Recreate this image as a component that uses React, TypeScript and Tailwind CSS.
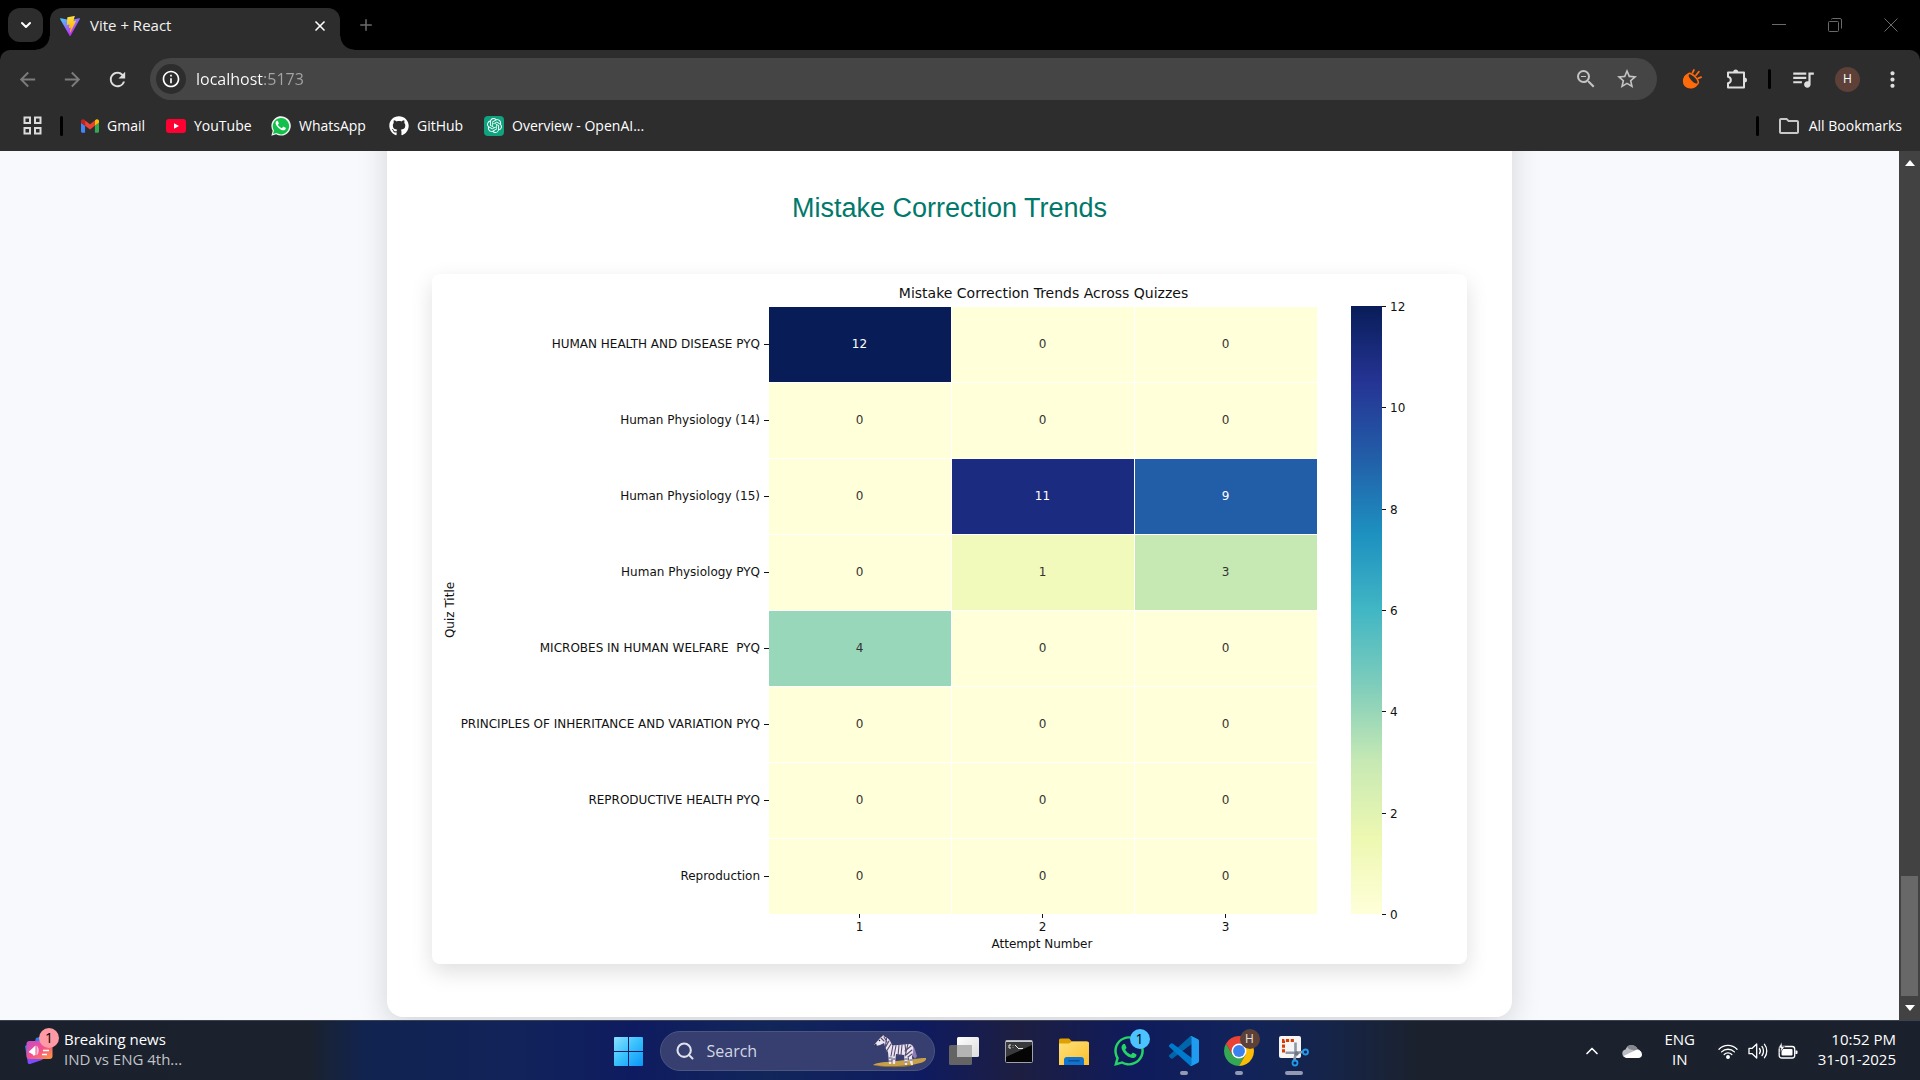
import type { ReactNode } from "react";
import {
  MdArrowBack,
  MdArrowForward,
  MdRefresh,
  MdInfoOutline,
  MdStarOutline,
  MdZoomOut,
  MdQueueMusic,
  MdMoreVert,
  MdOutlineFolder,
} from "react-icons/md";
import { FaGithub, FaWhatsapp } from "react-icons/fa";
import { SiOpenai } from "react-icons/si";
import { ChevronDown, ChevronUp, Plus, X, Search } from "lucide-react";

/* ---------- logos ---------- */

function ViteLogo() {
  return (
    <svg viewBox="0 0 256 257" className="size-5 shrink-0" aria-hidden="true">
      <defs>
        <linearGradient id="vite-a" x1="0" y1="0" x2="0.6" y2="0.8">
          <stop offset="0" stopColor="#41D1FF" />
          <stop offset="1" stopColor="#BD34FE" />
        </linearGradient>
        <linearGradient id="vite-b" x1="0.4" y1="0" x2="0.5" y2="1">
          <stop offset="0" stopColor="#FFEA83" />
          <stop offset="0.1" stopColor="#FFDD35" />
          <stop offset="1" stopColor="#FFA800" />
        </linearGradient>
      </defs>
      <path fill="url(#vite-a)" d="M255.153 37.938L134.897 252.976c-2.483 4.44-8.862 4.466-11.382.048L.875 37.958c-2.746-4.814 1.371-10.646 6.827-9.67l120.385 21.517a6.537 6.537 0 0 0 2.322-.004l117.867-21.483c5.438-.991 9.574 4.796 6.877 9.62Z" />
      <path fill="url(#vite-b)" d="M185.432.063L96.44 17.501a3.268 3.268 0 0 0-2.634 3.014l-5.474 92.456a3.268 3.268 0 0 0 3.997 3.378l24.777-5.718c2.318-.535 4.413 1.507 3.936 3.838l-7.361 36.047c-.495 2.426 1.782 4.5 4.151 3.78l15.304-4.649c2.372-.72 4.652 1.36 4.15 3.788l-11.698 56.621c-.732 3.542 3.979 5.473 5.943 2.437l1.313-2.028l72.516-144.72c1.215-2.423-.88-5.186-3.54-4.672l-25.505 4.922c-2.396.462-4.435-1.77-3.759-4.114l16.646-57.705c.677-2.35-1.37-4.583-3.769-4.113Z" />
    </svg>
  );
}

function GmailLogo() {
  return (
    <svg viewBox="52 42 88 66" className="h-[14px] w-[18px]" aria-hidden="true">
      <path fill="#4285f4" d="M58 108h14V74L52 59v43c0 3.32 2.69 6 6 6" />
      <path fill="#34a853" d="M120 108h14c3.32 0 6-2.69 6-6V59l-20 15" />
      <path fill="#fbbc04" d="M120 48v26l20-15v-8c0-7.42-8.47-11.65-14.4-7.2" />
      <path fill="#ea4335" d="M72 74V48l24 18 24-18v26L96 92" />
      <path fill="#c5221f" d="M52 51v8l20 15V48l-5.6-4.2c-5.94-4.45-14.4-.22-14.4 7.2" />
    </svg>
  );
}

function YouTubeLogo() {
  return (
    <svg viewBox="0 0 20 14" className="h-[14px] w-5" aria-hidden="true">
      <rect width="20" height="14" rx="3" fill="#ff0033" />
      <path d="M8 4.2v5.6L13 7z" fill="#fff" />
    </svg>
  );
}

function WhatsAppBookmark() {
  return (
    <svg viewBox="0 0 20 20" className="size-5" aria-hidden="true">
      <path d="M.4 19.7 1.7 14.8A9.7 9.7 0 1 1 5.2 18.3z" fill="#f4f4f4" />
      <path d="M2 18.1 3 14.6A8.2 8.2 0 1 1 5.5 17.1z" fill="#12c04a" />
      <path d="M7.1 5.4c-.3-.7-.7-.6-1-.6-.8.1-1.5 1-1.5 2.1 0 1.300 1 2.700 1.900 3.800 1.300 1.600 3 2.900 4.800 3.500 1.500.5 3-.2 3.300-1.200.2-.6.2-1.100 0-1.200l-2-1c-.3-.1-.5-.1-.7.2l-.8 1c-.2.200-.3.200-.600.100-1.500-.7-2.700-1.700-3.500-3.100-.1-.3 0-.4.100-.5l.600-.800c.1-.2.1-.4 0-.600z" fill="#fff" />
    </svg>
  );
}

function AppsGrid() {
  return (
    <svg viewBox="0 0 19 19" className="size-[19px]" fill="none" stroke="#dcdcdc" strokeWidth="2" aria-hidden="true">
      <rect x="1.500" y="1.500" width="5.500" height="5.500" />
      <rect x="12" y="1.500" width="5.500" height="5.500" />
      <rect x="1.500" y="12" width="5.500" height="5.500" />
      <rect x="12" y="12" width="5.500" height="5.500" />
    </svg>
  );
}

function OrangeExtension() {
  return (
    <svg viewBox="0 0 20 20" className="size-5" aria-hidden="true">
      <path d="M6.300 4.600C3.700 4.900.900 8 .900 12.200c0 4.400 3.300 7.200 7.600 7.200 3.700 0 6.800-1.900 7.400-4.500C13.600 15.600 4.600 9.500 6.300 4.600z" fill="#ff6a0a" />
      <path d="M6.400 4.800c-1 1.400-.2 4.200 2.300 6.900 2.500 2.600 5.500 4 7 3.200 1.400-1 .400-3.900-2.200-6.600C11 5.700 7.700 3.700 6.400 4.800z" fill="#2d2d2d" stroke="#ff6a0a" strokeWidth="1.600" />
      <path d="M10.600 3.600 11.900 1M14 6.200l2.800-3.400M16.200 9.400l2.900-1.300" stroke="#ff6a0a" strokeWidth="1.800" strokeLinecap="round" />
    </svg>
  );
}

function PuzzlePiece() {
  return (
    <svg viewBox="0 0 21 21" className="size-[21px]" aria-hidden="true">
      <path
        d="M2 3.500h16v15H2v-4.300c3.800-.8 3.800-5.600 0-6.400z"
        fill="none"
        stroke="#dedede"
        strokeWidth="2"
        strokeLinejoin="round"
      />
      <path d="M7.200 3a2.500 2.500 0 0 1 5 0zM18.500 8.500a2.500 2.500 0 0 1 0 5z" fill="#dedede" />
    </svg>
  );
}

function NewsIcon() {
  return (
    <svg viewBox="0 0 30 30" className="size-[30px]" aria-hidden="true">
      <defs>
        <linearGradient id="news-a" x1="0" y1="0" x2="1" y2="1">
          <stop offset="0" stopColor="#c44bd0" />
          <stop offset="0.500" stopColor="#f4508c" />
          <stop offset="1" stopColor="#ff9a3c" />
        </linearGradient>
      </defs>
      <path d="M12 4 22 1l3 10H10z" fill="#2f7ff0" />
      <path d="M1 12 6 9v16l-3-1z" fill="#1e88e5" />
      <path d="m3 24 18-1-3 3-12 4c-1.500.3-2-.5-2.200-1.500z" fill="#7c4dff" />
      <rect x="2.500" y="7" width="26" height="18" rx="3" fill="url(#news-a)" />
      <path d="m4.500 18 7-6.500v9.500l-2 .8-1-1.500z" fill="#fff" />
      <path d="M12.500 11.500c3 2 3 8 0 10z" fill="#ffc0dc" />
      <path d="M19 16.500h6M18 20.500h5" stroke="#fff" strokeWidth="1.600" />
    </svg>
  );
}

function WindowsLogo() {
  return (
    <svg viewBox="0 0 29 29" className="size-[29px]" aria-hidden="true">
      <defs>
        <linearGradient id="win" x1="0" y1="0" x2="1" y2="1">
          <stop offset="0" stopColor="#8be1ff" />
          <stop offset="0.500" stopColor="#37c0fc" />
          <stop offset="1" stopColor="#0a95f8" />
        </linearGradient>
      </defs>
      <path fill="url(#win)" d="M1 0h13v14H0V1a1 1 0 0 1 1-1zM15 0h13a1 1 0 0 1 1 1v13H15zM0 15h14v14H1a1 1 0 0 1-1-1zM15 15h14v13a1 1 0 0 1-1 1H15z" />
    </svg>
  );
}

function Zebra() {
  return (
    <svg viewBox="0 0 56 34" className="h-[34px] w-14" aria-hidden="true">
      <path d="M1 31c4-3 14-3 24-4 12-1 22-3 29-3 1 3-4 5-10 6-8 3-30 4-43 1z" fill="#c9a04a" />
      <path d="M1 31c12 2 32 1 42-1l-2 1.500C31 34 8 33.500 1 31z" fill="#8d6b2c" />
      <path d="M39 11c4 1 4 6 6 11l-2 3c-3-3-4-7-5-12z" fill="#8f7bb8" />
      <path d="M2 11 9 3l2-2 2 2c4 1 6 5 7 8 6 1 11-1 17-1 4 0 5 4 4 8l-1 5 1 8h-2l-3-9-1 9h-2l-1-10-8-1-1 10h-2l-1-8-1 8h-2l-1-12c-3-3-3-7-4-9l-4 2-4 1z" fill="#ece6f2" />
      <g stroke="#554b70" strokeWidth="1.100" fill="none" strokeLinecap="round">
        <path d="M9 4l3 3M12 3l3 5M14.500 4l-1 8M17 7l-4 7M19 10l-5 8M21 11l-2 11M24 11.500 22 22M27 11l-1 11M30 11l-1 10M33 10l1 9M36 10l-3 12M39 12l-6 5M40 16l-6 5M40 20l-4 3" />
        <path d="M17 24h2M17 27h2M21 25h2M33 25h2M33 28h2M38 26h2" />
      </g>
      <path d="M2 11l2-1.500 1 2-2 1.500zM8 3l1-3 2 2" fill="#3a3150" />
      <circle cx="7.500" cy="6.500" r="0.800" fill="#2b2440" />
    </svg>
  );
}

function TaskView() {
  return (
    <svg viewBox="0 0 30 28" className="h-7 w-[30px]" aria-hidden="true">
      <defs>
        <linearGradient id="tv" x1="0" y1="0" x2="1" y2="1">
          <stop offset="0" stopColor="#ffffff" />
          <stop offset="1" stopColor="#dcdcdc" />
        </linearGradient>
      </defs>
      <rect x="0" y="8" width="23" height="20" rx="1.500" fill="#646464" />
      <rect x="8" y="0" width="22" height="20" rx="1.500" fill="url(#tv)" />
      <path d="M8 8h15v12H9.500A1.500 1.500 0 0 1 8 18.500z" fill="#b4b4b4" />
    </svg>
  );
}

function Terminal() {
  return (
    <svg viewBox="0 0 28 23" className="h-[23px] w-7" aria-hidden="true">
      <rect x="0.500" y="0.500" width="27" height="22" rx="1" fill="#050505" stroke="#9da3ae" />
      <path d="M1 1h26v4L1 17z" fill="#3a3a3c" />
      <rect x="1" y="0.500" width="26" height="1.500" fill="#c9ccd2" />
      <path d="M6 5H4v3h2M8 5.500v.5M8 7.500V8M10 5l3 3M13 8.500h5" stroke="#e8e8e8" strokeWidth="1" fill="none" />
    </svg>
  );
}

function Explorer() {
  return (
    <svg viewBox="0 0 30 27" className="h-[27px] w-[30px]" aria-hidden="true">
      <defs>
        <linearGradient id="fold" x1="0" y1="0" x2="1" y2="1">
          <stop offset="0" stopColor="#ffe07a" />
          <stop offset="1" stopColor="#fbc02d" />
        </linearGradient>
      </defs>
      <path d="M0 2a1.500 1.500 0 0 1 1.500-1.500H10l3 3H28V8H0z" fill="#e0a000" />
      <path d="M0 5.500h10l3-2h15.500A1.500 1.500 0 0 1 30 5v22H0z" fill="url(#fold)" />
      <path d="M5 22a3 3 0 0 1 3-3h14a3 3 0 0 1 3 3v5H5z" fill="#1273cf" />
      <path d="M10 22.800h10" stroke="#0b4f96" strokeWidth="1.500" strokeLinecap="round" />
    </svg>
  );
}

function VsCode() {
  return (
    <svg viewBox="0 0 100 100" className="size-[30px]" aria-hidden="true">
      <path d="M96.460 10.800 75.860.880a6.230 6.230 0 0 0-7.100 1.210L1.300 63.570a4.170 4.170 0 0 0 0 6.160l5.510 5.010a4.170 4.170 0 0 0 5.320.240L93.360 13.360A4.140 4.140 0 0 1 100 16.670v-.240a6.250 6.250 0 0 0-3.540-5.630z" fill="#0065a9" />
      <path d="M96.460 89.200 75.860 99.120a6.230 6.230 0 0 1-7.100-1.210L1.300 36.430a4.170 4.170 0 0 1 0-6.160l5.510-5.010a4.170 4.170 0 0 1 5.320-.240l81.230 61.620A4.140 4.140 0 0 0 100 83.330v.240a6.250 6.250 0 0 1-3.540 5.630z" fill="#007acc" />
      <path d="M75.860 99.130a6.230 6.230 0 0 1-7.110-1.210A3.660 3.660 0 0 0 75 95.330V4.670a3.660 3.660 0 0 0-6.250-2.590A6.230 6.230 0 0 1 75.860.870l20.600 9.910A6.250 6.250 0 0 1 100 16.410v67.180a6.250 6.250 0 0 1-3.540 5.630z" fill="#1f9cf0" />
    </svg>
  );
}

function ChromeLogo() {
  return (
    <svg viewBox="0 0 48 48" className="size-[30px]" aria-hidden="true">
      <path d="M3.220 12 13.600 30 24 36l10.400-6L24 48A24 24 0 0 1 3.220 12z" fill="#34a853" />
      <path d="M44.780 12A24 24 0 0 1 24 48l10.390-18L34 18l-10-6z" fill="#fbbc05" />
      <path d="M44.780 12H24l-10.390 18L3.220 12A24 24 0 0 1 44.780 12z" fill="#ea4335" />
      <circle cx="24" cy="24" r="12" fill="#fff" />
      <circle cx="24" cy="24" r="9.500" fill="#3b82ee" />
    </svg>
  );
}

function SnippingTool() {
  return (
    <svg viewBox="0 0 30 31" className="h-[31px] w-[30px]" aria-hidden="true">
      <rect x="0" y="0" width="22" height="22" rx="2" fill="#f5f5f5" />
      <path d="M4.500 16.500v-12h12" fill="none" stroke="#d83b01" strokeWidth="3" strokeDasharray="3.200 1.600" />
      <path d="M16.500 6.500v12l-1.200 6M6.500 16.800h12l6-1" fill="none" stroke="#8d99a6" strokeWidth="2.600" />
      <circle cx="17.500" cy="17.500" r="2.200" fill="#6d7883" />
      <circle cx="26.500" cy="16" r="2.500" fill="none" stroke="#1e9be9" strokeWidth="1.800" />
      <circle cx="16" cy="27" r="2.500" fill="none" stroke="#1e9be9" strokeWidth="1.800" />
    </svg>
  );
}

function Cloud() {
  return (
    <svg viewBox="0 0 20 13" className="h-[13px] w-5" aria-hidden="true">
      <path d="M4 12.500A4 4 0 0 1 3.500 4.600 6.500 6.500 0 0 1 15.500 4 4.500 4.500 0 0 1 16 12.500z" fill="#b9bcc2" />
      <path d="M5 1.800A6.500 6.500 0 0 1 15.500 4l-3 1.500L7 4z" fill="#85888e" />
      <path d="M4 13 1.500 11 13 5.500c4-1.500 7 1 7 4 0 2-1.500 3.500-3.500 3.500z" fill="#fff" />
    </svg>
  );
}

function Wifi() {
  return (
    <svg viewBox="0 0 20 16" className="h-4 w-5" fill="none" stroke="#fff" strokeWidth="1.300" strokeLinecap="round" aria-hidden="true">
      <path d="M1 6.200a12.600 12.600 0 0 1 18 0M3.600 8.900a9 9 0 0 1 12.800 0M6.200 11.500a5.400 5.400 0 0 1 7.600 0" />
      <circle cx="10" cy="14" r="1.300" fill="#fff" />
    </svg>
  );
}

function Speaker() {
  return (
    <svg viewBox="0 0 20 18" className="h-[18px] w-5" fill="none" stroke="#fff" strokeWidth="1.300" strokeLinecap="round" strokeLinejoin="round" aria-hidden="true">
      <path d="M1 6.300v5.400h3.200L8.700 16V2L4.200 6.300z" />
      <path d="M11.500 6.500c1 1.400 1 3.600 0 5M14 4.500c2 2.500 2 6.500 0 9M16.500 2.300c3 3.500 3 9.900 0 13.400" />
    </svg>
  );
}

function Battery() {
  return (
    <svg viewBox="0 0 20 18" className="h-[18px] w-5" aria-hidden="true">
      <rect x="1.200" y="4.500" width="15.500" height="11.500" rx="2.500" fill="none" stroke="#fff" strokeWidth="1.300" />
      <rect x="3.500" y="7" width="11" height="6.500" rx="1" fill="#fff" />
      <path d="M17.500 8.500h1.200a.8.8 0 0 1 .8.800v2a.8.8 0 0 1-.8.800h-1.200z" fill="#fff" />
      <path d="M3.800 0 .300 6H3l-.800 4.500L6.800 4.600H4.200z" fill="#fff" stroke="#1b222d" strokeWidth="0.600" />
    </svg>
  );
}

/* ---------- browser chrome ---------- */

function TabStrip() {
  return (
    <div className="flex h-[50px] items-end bg-black">
      <button aria-label="Search tabs" className="relative z-10 mb-2 ml-2 flex h-[34px] w-[35px] items-center justify-center rounded-xl bg-[#2d2d2d] text-white">
        <ChevronDown className="size-4" strokeWidth={3} />
      </button>
      <div className="relative ml-[7px] flex h-[42px] w-[290px] items-center rounded-t-xl bg-[#2d2d2d] pb-[7px] pl-[10px] pr-3">
        <span className="absolute -left-[14px] bottom-0 size-[14px] bg-[radial-gradient(circle_at_0_0,#000_13px,#2d2d2d_14px)]" />
        <span className="absolute -right-[14px] bottom-0 size-[14px] bg-[radial-gradient(circle_at_100%_0,#000_13px,#2d2d2d_14px)]" />
        <ViteLogo />
        <span className="ml-[10px] flex-1 text-[15px] text-[#f2f2f2]">Vite + React</span>
        <button aria-label="Close tab" className="text-white">
          <X className="size-4" strokeWidth={2.500} />
        </button>
      </div>
      <button aria-label="New tab" className="mb-4 ml-[17px] text-[#6b6b6b]">
        <Plus className="size-[18px]" />
      </button>
      <div className="mb-[18px] ml-auto flex items-center gap-[42px] pr-[22px] text-[#6a6a6a]">
        <button aria-label="Minimize">
          <svg viewBox="0 0 14 14" className="size-[14px]" stroke="currentColor" fill="none"><path d="M0 6.500h14" /></svg>
        </button>
        <button aria-label="Restore">
          <svg viewBox="0 0 14 14" className="size-[14px]" stroke="currentColor" fill="none">
            <rect x="0.500" y="3.500" width="10" height="10" rx="1" />
            <path d="M3.500 1.500A1 1 0 0 1 4.500.500H12A1.500 1.500 0 0 1 13.500 2v8.500" />
          </svg>
        </button>
        <button aria-label="Close">
          <svg viewBox="0 0 14 14" className="size-[14px]" stroke="currentColor" fill="none"><path d="M.5.5l13 13M13.500.5l-13 13" /></svg>
        </button>
      </div>
    </div>
  );
}

function ToolButton({ label, children }: { label: string; children: ReactNode }) {
  return (
    <button aria-label={label} className="flex h-10 w-[45px] items-center justify-center">
      {children}
    </button>
  );
}

function Toolbar() {
  return (
    <div className="bg-black">
      <div className="flex items-center rounded-t-[10px] bg-[#2d2d2d] pl-[5px] pr-[5px] pt-2 text-[#dedede]">
        <ToolButton label="Back"><MdArrowBack className="size-[23px] text-[#7c7c7c]" /></ToolButton>
        <ToolButton label="Forward"><MdArrowForward className="size-[23px] text-[#7c7c7c]" /></ToolButton>
        <ToolButton label="Reload"><MdRefresh className="size-[23px]" /></ToolButton>
        <div className="ml-[10px] flex h-[42px] flex-1 items-center rounded-full bg-[#454545] pl-[6px] pr-[18px]">
          <button aria-label="Site information" className="flex size-[30px] items-center justify-center rounded-full bg-[#2d2d2d] text-white">
            <MdInfoOutline className="size-5" />
          </button>
          <input
            type="text"
            aria-label="Address"
            defaultValue="localhost:5173"
            spellCheck={false}
            className="ml-[10px] h-8 min-w-0 flex-1 bg-[linear-gradient(90deg,#ffffff_67px,#a5a5a5_67px)] bg-clip-text text-base text-transparent outline-none"
          />
          <button aria-label="Zoom" className="mr-[17px] text-[#c4c4c4]"><MdZoomOut className="size-6" /></button>
          <button aria-label="Bookmark this tab" className="text-[#c4c4c4]"><MdStarOutline className="size-6" /></button>
        </div>
        <div className="ml-3 flex items-center">
          <ToolButton label="Extension"><OrangeExtension /></ToolButton>
          <ToolButton label="Extensions"><PuzzlePiece /></ToolButton>
          <span className="mx-[9px] h-5 w-[3px] rounded-full bg-black" />
          <ToolButton label="Media controls"><MdQueueMusic className="size-[26px]" /></ToolButton>
          <button aria-label="Profile" className="mx-[10px] flex size-[25px] items-center justify-center rounded-full bg-[#5d4037] text-xs font-medium text-white">
            H
          </button>
          <ToolButton label="Menu"><MdMoreVert className="size-[25px]" /></ToolButton>
        </div>
      </div>
    </div>
  );
}

function Bookmark({ icon, label, width }: { icon: ReactNode; label: string; width: string }) {
  return (
    <a href="#" className={`flex shrink-0 items-center gap-2 whitespace-nowrap ${width}`}>
      {icon}
      <span>{label}</span>
    </a>
  );
}

function BookmarksBar() {
  return (
    <nav aria-label="Bookmarks" className="flex h-[51px] items-center bg-[#2d2d2d] pl-[23px] pr-[18px] text-sm text-white">
      <button aria-label="Apps"><AppsGrid /></button>
      <span className="ml-[18px] mr-[18px] h-5 w-[3px] rounded-full bg-black" />
      <Bookmark icon={<GmailLogo />} label="Gmail" width="w-[85px]" />
      <Bookmark icon={<YouTubeLogo />} label="YouTube" width="w-[105px]" />
      <Bookmark icon={<WhatsAppBookmark />} label="WhatsApp" width="w-[118px]" />
      <Bookmark icon={<FaGithub className="size-5" />} label="GitHub" width="w-[95px]" />
      <Bookmark
        icon={<span className="flex size-5 items-center justify-center rounded bg-[#10a37f]"><SiOpenai className="size-[15px]" /></span>}
        label="Overview - OpenAI..."
        width="w-[170px]"
      />
      <span className="ml-auto mr-[18px] h-5 w-[3px] rounded-full bg-black" />
      <a href="#" className="flex items-center gap-2">
        <MdOutlineFolder className="size-6 text-[#c8c8c8]" />
        <span>All Bookmarks</span>
      </a>
    </nav>
  );
}

/* ---------- heat map ---------- */

const rows: { title: string; values: number[] }[] = [
  { title: "HUMAN HEALTH AND DISEASE PYQ", values: [12, 0, 0] },
  { title: "Human Physiology (14)", values: [0, 0, 0] },
  { title: "Human Physiology (15)", values: [0, 11, 9] },
  { title: "Human Physiology PYQ", values: [0, 1, 3] },
  { title: "MICROBES IN HUMAN WELFARE \u00a0PYQ", values: [4, 0, 0] },
  { title: "PRINCIPLES OF INHERITANCE AND VARIATION PYQ", values: [0, 0, 0] },
  { title: "REPRODUCTIVE HEALTH PYQ", values: [0, 0, 0] },
  { title: "Reproduction", values: [0, 0, 0] },
];

const cellColor: Record<number, string> = {
  0: "#ffffd9",
  1: "#f1fabb",
  3: "#c6e9b4",
  4: "#98d7b9",
  9: "#225da8",
  11: "#1b2b80",
  12: "#081d58",
};

const scale = ["#081d58", "#253494", "#225ea8", "#1d91c0", "#41b6c4", "#7fcdbb", "#c7e9b4", "#edf8b1", "#ffffd9"];

const MAP = { x: 337, y: 32, w: 549, h: 608 };
const CELL_W = MAP.w / 3;
const CELL_H = MAP.h / rows.length;

function HeatMap() {
  return (
    <svg
      viewBox="0 0 1035 690"
      role="img"
      aria-label="Mistake Correction Trends Across Quizzes"
      className="block w-full font-['DejaVu_Sans',sans-serif] text-xs"
      fill="#111"
    >
      <defs>
        <linearGradient id="ylgnbu" x1="0" y1="0" x2="0" y2="1">
          {scale.map((c, i) => (
            <stop key={c} offset={i / 8} stopColor={c} />
          ))}
        </linearGradient>
      </defs>
      <text x={MAP.x + MAP.w / 2} y="24" textAnchor="middle" className="text-sm">
        Mistake Correction Trends Across Quizzes
      </text>
      {rows.map((row, r) => {
        const cy = MAP.y + CELL_H * (r + 0.5);
        return (
          <g key={row.title}>
            <text x="328" y={cy + 4} textAnchor="end">{row.title}</text>
            <path d={`M332 ${cy + 0.5}h5`} stroke="#111" />
            {row.values.map((v, c) => (
              <g key={c}>
                <rect
                  x={MAP.x + CELL_W * c}
                  y={MAP.y + CELL_H * r + 1}
                  width={CELL_W - 1}
                  height={CELL_H - 1}
                  fill={cellColor[v]}
                />
                <text x={MAP.x + CELL_W * (c + 0.5) - 1} y={cy + 4} textAnchor="middle" fill={v > 4 ? "#fff" : "#333"}>
                  {v}
                </text>
              </g>
            ))}
          </g>
        );
      })}
      {[1, 2, 3].map((n) => {
        const cx = MAP.x + CELL_W * (n - 0.5) - 1;
        return (
          <g key={n}>
            <path d={`M${cx} 640v4`} stroke="#111" />
            <text x={cx} y="657" textAnchor="middle">{n}</text>
          </g>
        );
      })}
      <text x="610" y="674" textAnchor="middle">Attempt Number</text>
      <text x="22" y="336" textAnchor="middle" transform="rotate(-90 22 336)">Quiz Title</text>
      <rect x="919" y="32" width="31" height="608" fill="url(#ylgnbu)" />
      {[12, 10, 8, 6, 4, 2, 0].map((n, i) => {
        const y = 32 + (608 / 6) * i;
        return (
          <g key={n}>
            <path d={`M950 ${Math.round(y) + 0.5}h4`} stroke="#111" />
            <text x="958" y={Math.round(y) + 5}>{n}</text>
          </g>
        );
      })}
    </svg>
  );
}

/* ---------- page ---------- */

function Scrollbar() {
  return (
    <div aria-hidden="true" className="flex w-[21px] shrink-0 flex-col items-center bg-[#424242] pb-[9px] pt-[9px]">
      <svg viewBox="0 0 10 6" className="h-[6px] w-[10px]"><path d="M5 0l5 6H0z" fill="#fff" /></svg>
      <div className="mb-[9px] flex w-full flex-1 flex-col justify-end pl-[2px] pr-[2px]">
        <div className="h-[120px] bg-[#686868]" />
      </div>
      <svg viewBox="0 0 10 6" className="h-[6px] w-[10px]"><path d="M5 6 0 0h10z" fill="#fff" /></svg>
    </div>
  );
}

function Page() {
  return (
    <div className="flex min-h-0 flex-1">
      <main className="flex-1 overflow-hidden bg-[#f7f9fd] font-['Liberation_Sans',Arial,sans-serif]">
        <section className="mx-auto -mt-10 w-full max-w-[1125px] rounded-b-2xl bg-white px-[45px] pb-[53px] pt-[81px] shadow-[0_8px_30px_rgba(0,0,0,0.15)]">
          <h2 className="text-center text-[27px] leading-8 text-[#00796b]">Mistake Correction Trends</h2>
          <figure className="mt-[50px] rounded-lg bg-white shadow-[0_8px_22px_rgba(0,0,0,0.13)]">
            <HeatMap />
          </figure>
        </section>
      </main>
      <Scrollbar />
    </div>
  );
}

/* ---------- taskbar ---------- */

function TaskbarApp({ label, running, badge, children }: { label: string; running?: string; badge?: ReactNode; children: ReactNode }) {
  return (
    <button aria-label={label} className="relative flex h-[60px] w-[55px] items-center justify-center">
      {children}
      {badge}
      {running && <span className={`absolute bottom-[6px] h-1 rounded-full bg-[#9299b5] ${running}`} />}
    </button>
  );
}

function Taskbar() {
  return (
    <footer className="grid h-[60px] shrink-0 grid-cols-[1fr_auto_1fr] items-center border-t border-[#3a4254] bg-[linear-gradient(90deg,#1b212c_0%,#1b222d_16%,#11234f_19%,#11235a_27%,#0f1b60_33%,#12265a_40%,#0f1b60_48%,#1d1e40_53%,#0f1b5c_59%,#12235a_65%,#15244a_69%,#1b222d_74%,#1b212c_100%)] text-white">
      <button className="flex items-center justify-self-start pl-6 text-left">
        <span className="relative -mt-1">
          <NewsIcon />
          <span className="absolute -right-[5px] -top-[6px] flex size-5 items-center justify-center rounded-full bg-[#ff99a4] text-sm text-black">1</span>
        </span>
        <span className="ml-[10px] pb-1 text-[15px] leading-5">
          <span className="block">Breaking news</span>
          <span className="block text-[#c0c3c8]">IND vs ENG 4th...</span>
        </span>
      </button>

      <div className="flex items-center pl-[2px]">
        <TaskbarApp label="Start"><WindowsLogo /></TaskbarApp>
        <div className="ml-1 mr-[2px] flex h-10 w-[275px] items-center rounded-full border border-[#4a5580] bg-[#363f70] pl-[14px] pr-[6px]">
          <Search className="size-5 text-[#dfe2ea]" strokeWidth={2.500} />
          <input type="text" aria-label="Search" placeholder="Search" className="ml-3 h-8 min-w-0 flex-1 bg-transparent text-base text-white outline-none placeholder:text-[#d4d7e2]" />
          <Zebra />
        </div>
        <TaskbarApp label="Task view"><TaskView /></TaskbarApp>
        <TaskbarApp label="Command Prompt"><Terminal /></TaskbarApp>
        <TaskbarApp label="File Explorer"><Explorer /></TaskbarApp>
        <TaskbarApp
          label="WhatsApp"
          badge={<span className="absolute right-[7px] top-2 flex size-5 items-center justify-center rounded-full bg-[#4cc2ff] text-sm text-black">1</span>}
        >
          <FaWhatsapp className="size-[34px] text-[#25d366]" />
        </TaskbarApp>
        <TaskbarApp label="Visual Studio Code" running="w-2"><VsCode /></TaskbarApp>
        <TaskbarApp
          label="Google Chrome"
          running="w-2"
          badge={<span className="absolute right-[7px] top-2 flex size-5 items-center justify-center rounded-full bg-[#5d4037] text-xs text-[#e6e0de]">H</span>}
        >
          <ChromeLogo />
        </TaskbarApp>
        <TaskbarApp label="Snipping Tool" running="w-[18px]"><SnippingTool /></TaskbarApp>
      </div>

      <div className="flex items-center justify-self-end pr-6 text-[15px] leading-5">
        <button aria-label="Show hidden icons"><ChevronUp className="size-5" /></button>
        <button aria-label="OneDrive" className="ml-5"><Cloud /></button>
        <button className="ml-5 w-9 pb-1 text-center">ENG<br />IN</button>
        <button aria-label="Network, volume and battery" className="ml-5 flex items-center gap-[10px]">
          <Wifi />
          <Speaker />
          <Battery />
        </button>
        <time className="ml-5 whitespace-nowrap pb-1 text-right" dateTime="2025-01-31T22:52">10:52 PM<br />31-01-2025</time>
      </div>
    </footer>
  );
}

export default function App() {
  return (
    <div className="flex h-screen flex-col overflow-hidden font-['Open_Sans','Noto_Sans',sans-serif]">
      <header className="shrink-0">
        <TabStrip />
        <Toolbar />
        <BookmarksBar />
      </header>
      <Page />
      <Taskbar />
    </div>
  );
}
